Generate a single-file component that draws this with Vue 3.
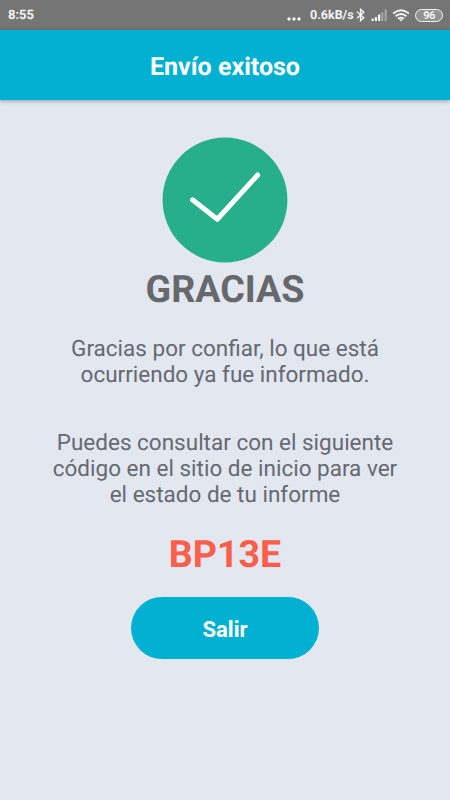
<script setup>
const status = { time: '8:55', speed: '0.6kB/s', battery: '96' }
const code = 'BP13E'
const thanks = ['Gracias por confiar, lo que está', 'ocurriendo ya fue informado.']
const hint = ['Puedes consultar con el siguiente', 'código en el sitio de inicio para ver', 'el estado de tu informe']
</script>

<template>
  <div class="screen">
    <div class="status">
      <span class="time">{{ status.time }}</span>
      <svg class="dots" width="16" height="4" viewBox="0 0 16 4" fill="#f4f4f4">
        <circle cx="2" cy="2" r="1.7" />
        <circle cx="7" cy="2" r="1.7" />
        <circle cx="12" cy="2" r="1.7" />
      </svg>
      <span class="speed">{{ status.speed }}</span>
      <svg class="bluetooth" width="9" height="14" viewBox="0 0 9 14" fill="none" stroke="#f4f4f4" stroke-width="1.4">
        <path d="M1 3.8 7.8 9.8 4.6 12.6V1.3L7.8 4.2 1 10.2" />
      </svg>
      <svg class="signal" width="17" height="12" viewBox="0 0 17 12" fill="#f4f4f4">
        <rect x="0.5" y="9.6" width="2.2" height="2.4" />
        <rect x="3.8" y="8" width="2.2" height="4" />
        <rect x="7" y="5.5" width="2.2" height="6.5" />
        <rect x="10.3" y="3" width="2" height="9" opacity=".4" />
        <rect x="13.6" y="0.3" width="2" height="11.7" opacity=".4" />
      </svg>
      <svg class="wifi" width="18" height="13" viewBox="0 0 18 13" fill="none" stroke="#f4f4f4" stroke-width="1.8">
        <path d="M1 4.6Q9-2.2 17 4.6" />
        <path d="M3.5 7.3Q9 2.6 14.5 7.3" />
        <path d="M6 9.8Q9 7.4 12 9.8" />
        <path d="M7.2 10.6Q9 9.6 10.8 10.6L9 12.6Z" fill="#f4f4f4" stroke="none" />
      </svg>
      <span class="battery">{{ status.battery }}</span>
    </div>
    <header class="bar">Envío exitoso</header>
    <main class="content">
      <svg class="check" width="126" height="126" viewBox="0 0 126 126">
        <circle cx="63" cy="63" r="62.4" fill="#27ae8a" />
        <path d="M30.5 62.8 55.3 82.3 95.7 38" fill="none" stroke="#fff" stroke-width="5" stroke-linecap="round" stroke-linejoin="round" />
      </svg>
      <h1 class="title">GRACIAS</h1>
      <p class="text thanks"><span v-for="line in thanks" :key="line">{{ line }}</span></p>
      <p class="text hint"><span v-for="line in hint" :key="line">{{ line }}</span></p>
      <div class="code">{{ code }}</div>
      <button class="exit">Salir</button>
    </main>
  </div>
</template>

<style>
body {
  background: #e2e7f0;
}
</style>

<style scoped>
.screen {
  width: 450px;
  height: 800px;
  display: flex;
  flex-direction: column;
  overflow: hidden;
  background: #e2e7f0;
  font-family: Roboto, "Liberation Sans", sans-serif;
  text-rendering: geometricPrecision;
}
.status {
  box-sizing: border-box;
  height: 30px;
  flex: none;
  display: flex;
  align-items: center;
  padding: 0 7px 0 8px;
  background: #757575;
  color: #f4f4f4;
  font-size: 13px;
  font-weight: 700;
}
.time {
  margin-right: auto;
  padding-top: 1px;
}
.dots {
  margin: 7px 7px 0 0;
}
.speed {
  width: 42px;
  padding-top: 1px;
  font-size: 12.5px;
  white-space: nowrap;
}
.bluetooth {
  margin-left: 4px;
}
.signal {
  margin-left: 6px;
}
.wifi {
  margin-left: 4px;
}
.battery {
  box-sizing: border-box;
  width: 28px;
  height: 13px;
  margin-left: 5px;
  border: 1.5px solid #f4f4f4;
  border-radius: 7px;
  background: #929292;
  font-size: 11px;
  letter-spacing: -0.6px;
  line-height: 11px;
  text-align: center;
}
.bar {
  height: 70px;
  flex: none;
  display: flex;
  align-items: center;
  justify-content: center;
  padding-top: 5px;
  box-sizing: border-box;
  background: #02b1d1;
  box-shadow: 0 1px 4px rgba(0, 0, 0, 0.35);
  color: #fff;
  font-size: 25px;
  font-weight: 700;
}
.content {
  display: flex;
  flex-direction: column;
  align-items: center;
  padding-top: 37px;
}
.title,
.code {
  margin: 0;
  font-size: 37.6px;
  font-weight: 700;
  line-height: 46px;
}
.title {
  margin-top: 4px;
  color: #66686c;
}
.text {
  margin: 0;
  display: flex;
  flex-direction: column;
  align-items: center;
  color: #666970;
  font-size: 22.5px;
  line-height: 26.3px;
  white-space: nowrap;
}
.thanks {
  margin-top: 23px;
}
.hint {
  margin-top: 41px;
}
.code {
  margin-top: 24px;
  color: #fa5f4b;
}
.exit {
  width: 188px;
  height: 62px;
  margin-top: 19px;
  padding: 3px 0 0;
  border: 0;
  border-radius: 31px;
  background: #02b1d1;
  color: #fff;
  font-family: inherit;
  font-size: 22px;
  font-weight: 700;
}
</style>
